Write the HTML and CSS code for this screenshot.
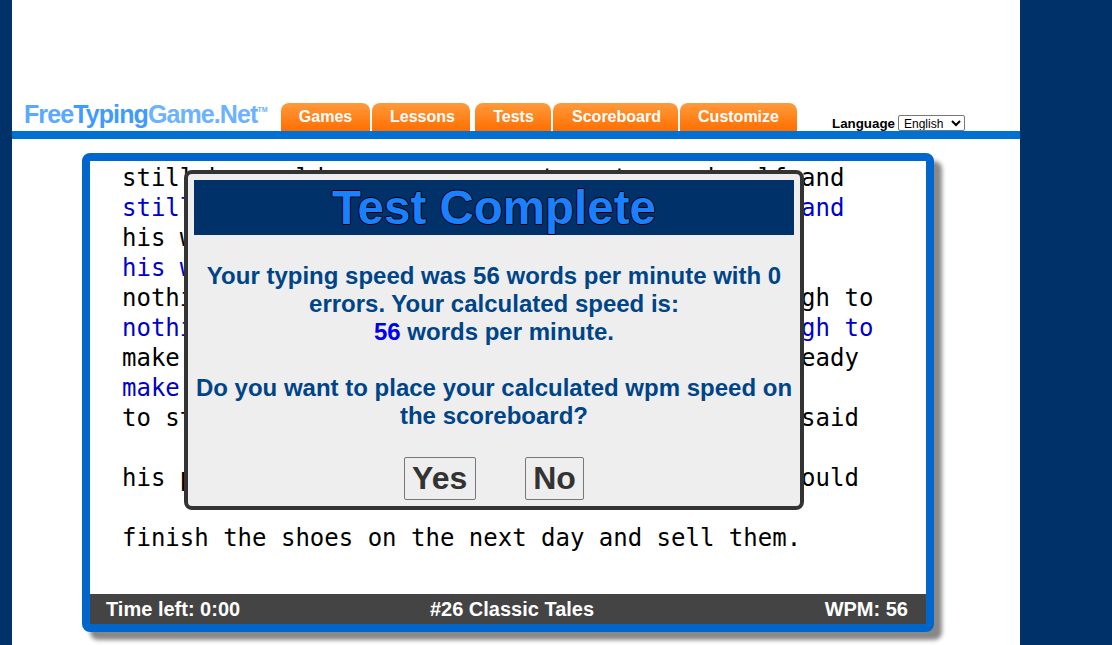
FILE: index.html
```html
<!DOCTYPE html>
<html lang="en">
<head>
<meta charset="utf-8">
<title>Free Typing Game</title>
<link rel="stylesheet" href="styles.css">
</head>
<body>
<div class="page">
  <header class="header">
    <div class="logo"><span class="l1">Free</span><span class="l2">Typing</span><span class="l3">Game.Net</span><sup class="tm">TM</sup></div>
    <nav class="tabs">
      <a class="tab tab-games">Games</a>
      <a class="tab tab-lessons">Lessons</a>
      <a class="tab tab-tests">Tests</a>
      <a class="tab tab-score">Scoreboard</a>
      <a class="tab tab-custom">Customize</a>
    </nav>
    <div class="language">
      <label class="lang-label" for="lang">Language</label>
      <select class="lang-select" id="lang"><option>English</option></select>
    </div>
  </header>
  <div class="bar"></div>
  <main class="game">
    <div class="text">
      <div class="line">still he would never save as to eat sound self and</div>
      <div class="line typed">still he would never save as to eat sound self and</div>
      <div class="line">his work was good but there was never any money</div>
      <div class="line typed">his work was good but there was never any money</div>
      <div class="line">nothing left for him but leather which was enough to</div>
      <div class="line typed">nothing left for him but leather which was enough to</div>
      <div class="line">make one more pair of shoes. He cut them out, ready</div>
      <div class="line typed">make</div>
      <div class="line">to stitch in the morning, and went to rest. He said</div>
      <div class="line"></div>
      <div class="line">his prayers and went to sleep knowing that he would</div>
      <div class="line"></div>
      <div class="line">finish the shoes on the next day and sell them.</div>
    </div>
    <footer class="status">
      <span class="st-left">Time left: 0:00</span>
      <span class="st-mid">#26 Classic Tales</span>
      <span class="st-right">WPM: 56</span>
    </footer>
    <section class="modal">
      <h1 class="modal-title">Test Complete</h1>
      <p class="modal-text">Your typing speed was 56 words per minute with 0 errors. Your calculated speed is:<br><span class="speed">56</span> words per minute.</p>
      <p class="modal-text ask">Do you want to place your calculated wpm speed on the scoreboard?</p>
      <div class="actions">
        <button class="btn">Yes</button>
        <button class="btn">No</button>
      </div>
    </section>
  </main>
</div>
</body>
</html>
```
FILE: styles.css
```css
html, body { margin: 0; padding: 0; height: 100%; overflow: hidden; }
body { background: #003169; font-family: "Liberation Sans", Arial, sans-serif; }
.page { margin-left: 12px; width: 1008px; height: 645px; background: #fff; overflow: hidden; }

.header { height: 131px; display: flex; align-items: flex-end; box-sizing: border-box; }
.logo { width: 269px; box-sizing: border-box; padding-left: 12px; padding-bottom: 2px; font-size: 25px; line-height: 29px; font-weight: bold; letter-spacing: -0.9px; white-space: nowrap; }
.l1 { color: #5aa8ff; }
.l2 { color: #3f9bff; }
.l3 { color: #6cb2ff; }
.tm { font-size: 7px; letter-spacing: 0; color: #6cb2ff; vertical-align: 11px; line-height: 0; }

.tabs { display: flex; }
.tab { height: 28px; line-height: 27px; box-sizing: border-box; text-align: center; color: #fff; font-weight: bold; font-size: 16px; border-radius: 8px 8px 0 0; background: linear-gradient(#ff9a3c, #ff6f00); }
.tab-games { width: 89px; margin-right: 2px; }
.tab-lessons { width: 98px; margin-right: 5px; padding-left: 3px; }
.tab-tests { width: 76px; margin-right: 2px; padding-left: 1px; }
.tab-score { width: 125px; margin-right: 2px; padding-left: 2px; }
.tab-custom { width: 117px; }

.language { margin-left: 35px; display: flex; align-items: center; gap: 3px; height: 16px; }
.lang-label { font-size: 13.33px; font-weight: bold; color: #000; }
.lang-select { width: 67px; height: 16px; font-size: 12px; font-family: "Liberation Sans", Arial, sans-serif; padding: 0 0 0 1px; background: #fff; color: #000; border: 1px solid #767676; border-radius: 2px; }

.bar { height: 8px; background: #0070d2; }

.game { position: relative; margin: 14px 0 0 70px; width: 852px; height: 479px; box-sizing: border-box; border: 8px solid #0066cc; border-radius: 8px; box-shadow: 8px 8px 4px #888; background: #fff; display: flex; flex-direction: column; justify-content: space-between; }
.text { padding: 2px 0 0 32px; font-family: "DejaVu Sans Mono", monospace; font-size: 24px; line-height: 30px; color: #000; white-space: nowrap; }
.line { height: 30px; }
.typed { color: #0000cc; }

.status { height: 30px; background: #444; color: #fff; font-size: 20px; line-height: 30px; font-weight: bold; display: grid; grid-template-columns: 1fr auto 1fr; padding: 0 18px 0 16px; }
.st-mid { margin-left: 10px; }
.st-right { text-align: right; }

.modal { position: absolute; left: 94px; top: 9px; width: 620px; height: 340px; box-sizing: border-box; border: 4px solid #333; border-radius: 8px; background: #eee; padding: 6px 6px 0; text-align: center; }
.modal-title { margin: 0; height: 55px; background: #003169; color: #1a80ff; font-size: 47.5px; line-height: 55px; font-weight: bold; text-shadow: -1px 0 0 #000, 1px 0 0 #000, 0 -1px 0 #000, 0 1px 0 #000; }
.modal-text { margin: 27px 0 0; color: #004488; font-size: 24px; line-height: 28px; font-weight: bold; }
.ask { margin-top: 28px; }
.speed { color: #0000ee; }
.actions { margin-top: 27px; display: flex; justify-content: center; gap: 49px; }
.btn { height: 43px; padding: 0 7.5px; font-family: "Liberation Sans", Arial, sans-serif; font-size: 32px; font-weight: bold; color: #333; background: #eee; border: 1px solid #777; border-radius: 2px; }
```
